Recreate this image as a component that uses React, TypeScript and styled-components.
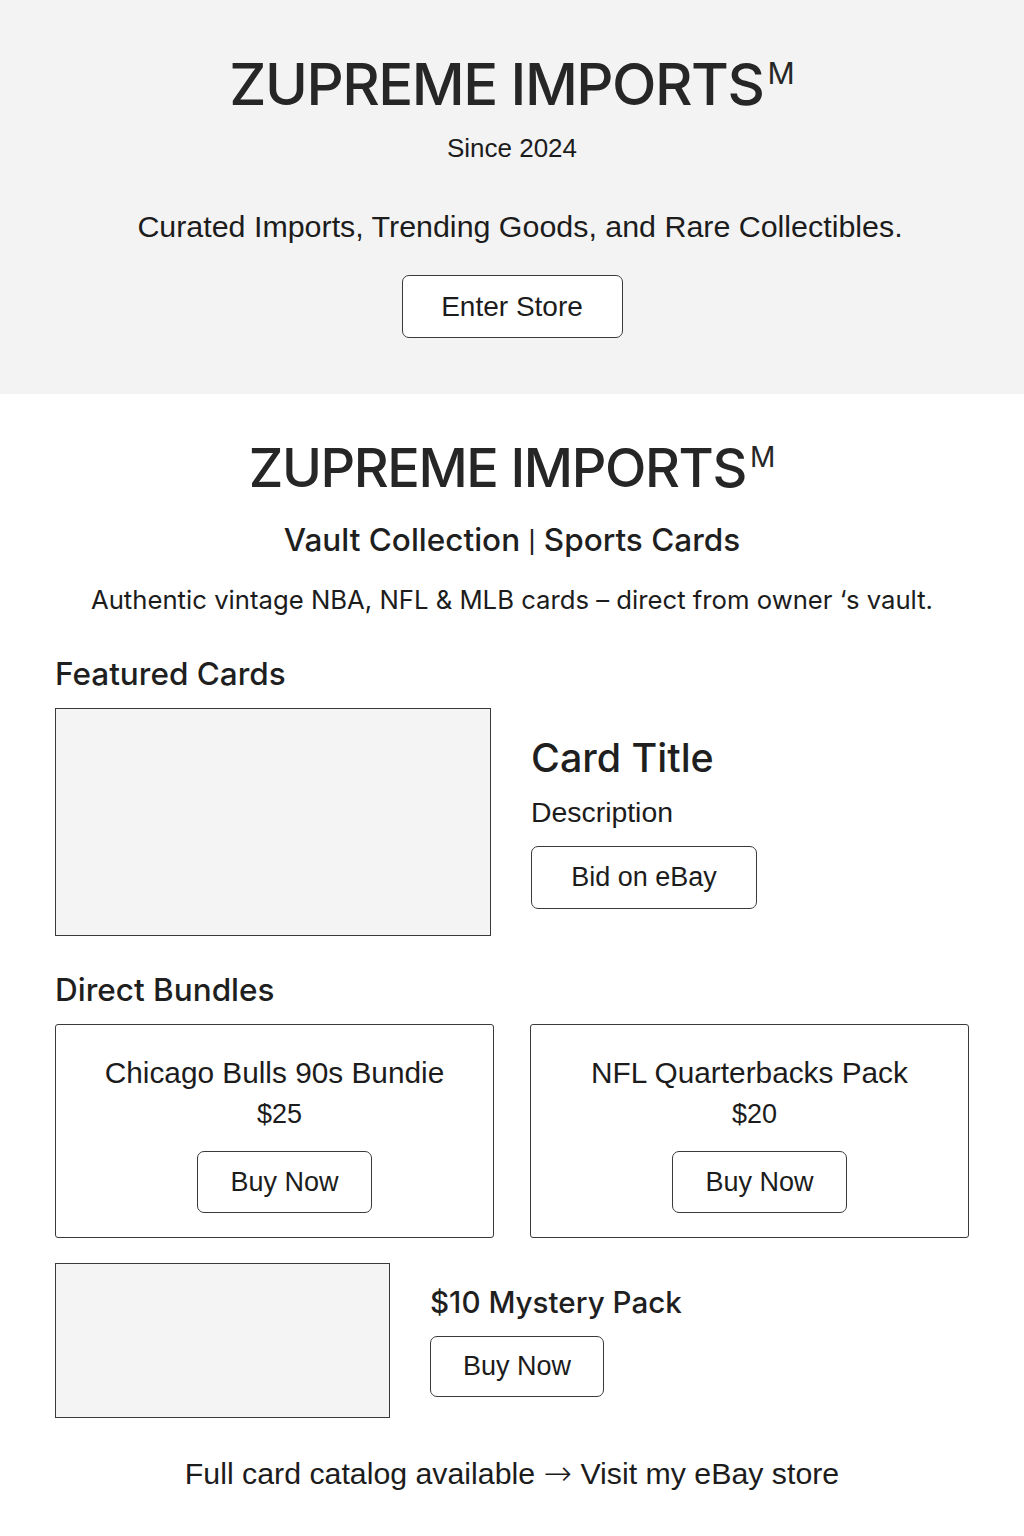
import React from "react";
import styled, { createGlobalStyle } from "styled-components";

const Global = createGlobalStyle`
  html, body { margin: 0; padding: 0; background: #ffffff; }
  body { font-family: "Liberation Sans", Arial, sans-serif; color: #1c1c1c; }
  * { box-sizing: border-box; }
`;

const Hero = styled.header`
  background: #f3f3f3;
  padding: 54px 0 56px;
  display: flex;
  flex-direction: column;
  align-items: center;
  text-align: center;
`;

const BrandTitle = styled.h1<{ $size: number; $spacing: number }>`
  margin: 0;
  font-family: Inter, "Liberation Sans", sans-serif;
  font-weight: 500;
  font-size: ${(p) => p.$size}px;
  line-height: 60px;
  letter-spacing: ${(p) => p.$spacing}px;
  color: #262626;
`;

const Sup = styled.span`
  display: inline-block;
  font-size: 0.52em;
  font-weight: 400;
  line-height: 0;
  vertical-align: 0;
  position: relative;
  top: -0.7em;
  margin-left: 4px;
  letter-spacing: 0;
`;

const Since = styled.p`
  margin: 19px 0 0;
  font-size: 26px;
  line-height: 30px;
`;

const Tagline = styled.p`
  margin: 47px 0 0 16px;
  font-size: 30.4px;
  line-height: 32px;
`;

const Button = styled.button<{ $w: number; $h: number; $size?: number }>`
  width: ${(p) => p.$w}px;
  height: ${(p) => p.$h}px;
  background: #ffffff;
  border: 1.5px solid #3a3a3a;
  border-radius: 7px;
  font-family: "Liberation Sans", Arial, sans-serif;
  font-size: ${(p) => p.$size ?? 27}px;
  color: #1c1c1c;
  display: flex;
  align-items: center;
  justify-content: center;
  padding: 0;
  cursor: pointer;
`;

const HeroButton = styled(Button)`
  margin-top: 33px;
`;

const Main = styled.main`
  padding: 44px 55px 60px;
  display: flex;
  flex-direction: column;
`;

const Intro = styled.div`
  display: flex;
  flex-direction: column;
  align-items: center;
  text-align: center;
`;

const Subtitle = styled.h2`
  margin: 25px 0 0;
  font-family: Inter, "Liberation Sans", sans-serif;
  font-weight: 500;
  font-size: 31.5px;
  line-height: 34px;
  color: #1f1f1f;
`;

const Pipe = styled.span`
  font-family: "Liberation Sans", Arial, sans-serif;
  font-weight: 400;
  font-size: 0.85em;
  position: relative;
  top: -2px;
`;

const Blurb = styled.p`
  margin: 26px 0 0;
  font-family: Inter, "Liberation Sans", sans-serif;
  font-size: 25.7px;
  line-height: 30px;
  color: #1c1c1c;
`;

const SectionHeading = styled.h3<{ $mt: number }>`
  margin: ${(p) => p.$mt}px 0 0;
  font-family: Inter, "Liberation Sans", sans-serif;
  font-weight: 500;
  font-size: 31.5px;
  line-height: 34px;
  color: #1f1f1f;
`;

const MediaRow = styled.div<{ $mt: number }>`
  margin-top: ${(p) => p.$mt}px;
  display: flex;
  align-items: center;
  gap: 40px;
`;

const Placeholder = styled.div<{ $w: number; $h: number }>`
  width: ${(p) => p.$w}px;
  height: ${(p) => p.$h}px;
  flex: none;
  background: #f4f4f4;
  border: 1.5px solid #3a3a3a;
`;

const MediaText = styled.div`
  display: flex;
  flex-direction: column;
  align-items: flex-start;
`;

const CardTitle = styled.div`
  font-family: Inter, "Liberation Sans", sans-serif;
  font-weight: 500;
  font-size: 39.4px;
  line-height: 44px;
  color: #1f1f1f;
`;

const Description = styled.div`
  margin-top: 17px;
  font-size: 28.4px;
  line-height: 30px;
`;

const MediaButton = styled(Button)<{ $mt: number }>`
  margin-top: ${(p) => p.$mt}px;
`;

const MysteryTitle = styled.div`
  font-family: Inter, "Liberation Sans", sans-serif;
  font-weight: 500;
  font-size: 29.6px;
  line-height: 34px;
  color: #1f1f1f;
`;

const BundleGrid = styled.div`
  margin-top: 17px;
  display: grid;
  grid-template-columns: 1fr 1fr;
  gap: 36px;
`;

const BundleCard = styled.div`
  height: 214px;
  border: 1.5px solid #3a3a3a;
  border-radius: 3px;
  padding-top: 32px;
  display: flex;
  flex-direction: column;
  align-items: center;
  text-align: center;
`;

const BundleName = styled.div`
  font-size: 29.8px;
  line-height: 32px;
`;

const Price = styled.div`
  margin: 9px 0 0 10px;
  font-size: 27px;
  line-height: 32px;
`;

const BundleButton = styled(Button)`
  margin: 21px 0 0 20px;
`;

const Footer = styled.p`
  margin: 38px 0 0;
  text-align: center;
  font-size: 30.3px;
  line-height: 32px;
`;

const Arrow = styled.span`
  font-family: "DejaVu Sans", sans-serif;
  font-weight: 300;
  font-size: 34px;
  position: relative;
  top: 1px;
`;

const bundles = [
  { name: "Chicago Bulls 90s Bundie", price: "$25" },
  { name: "NFL Quarterbacks Pack", price: "$20" },
];

export default function App() {
  return (
    <>
      <Global />
      <Hero>
        <BrandTitle $size={58} $spacing={-1.5}>
          ZUPREME IMPORTS<Sup>M</Sup>
        </BrandTitle>
        <Since>Since 2024</Since>
        <Tagline>Curated Imports, Trending Goods, and Rare Collectibles.</Tagline>
        <HeroButton $w={221} $h={63} $size={28}>
          Enter Store
        </HeroButton>
      </Hero>
      <Main>
        <Intro>
          <BrandTitle $size={54} $spacing={-1.4}>
            ZUPREME IMPORTS<Sup>M</Sup>
          </BrandTitle>
          <Subtitle>
            Vault Collection <Pipe>|</Pipe> Sports Cards
          </Subtitle>
          <Blurb>Authentic vintage NBA, NFL &amp; MLB cards – direct from owner ‘s vault.</Blurb>
        </Intro>

        <SectionHeading $mt={42}>Featured Cards</SectionHeading>
        <MediaRow $mt={17}>
          <Placeholder $w={436} $h={228} />
          <MediaText>
            <CardTitle>Card Title</CardTitle>
            <Description>Description</Description>
            <MediaButton $mt={19} $w={226} $h={63}>
              Bid on eBay
            </MediaButton>
          </MediaText>
        </MediaRow>

        <SectionHeading $mt={37}>Direct Bundles</SectionHeading>
        <BundleGrid>
          {bundles.map((b) => (
            <BundleCard key={b.name}>
              <BundleName>{b.name}</BundleName>
              <Price>{b.price}</Price>
              <BundleButton $w={175} $h={62}>
                Buy Now
              </BundleButton>
            </BundleCard>
          ))}
        </BundleGrid>

        <MediaRow $mt={25}>
          <Placeholder $w={335} $h={155} />
          <MediaText>
            <MysteryTitle>$10 Mystery Pack</MysteryTitle>
            <MediaButton $mt={17} $w={174} $h={61}>
              Buy Now
            </MediaButton>
          </MediaText>
        </MediaRow>

        <Footer>
          Full card catalog available <Arrow>→</Arrow> Visit my eBay store
        </Footer>
      </Main>
    </>
  );
}
